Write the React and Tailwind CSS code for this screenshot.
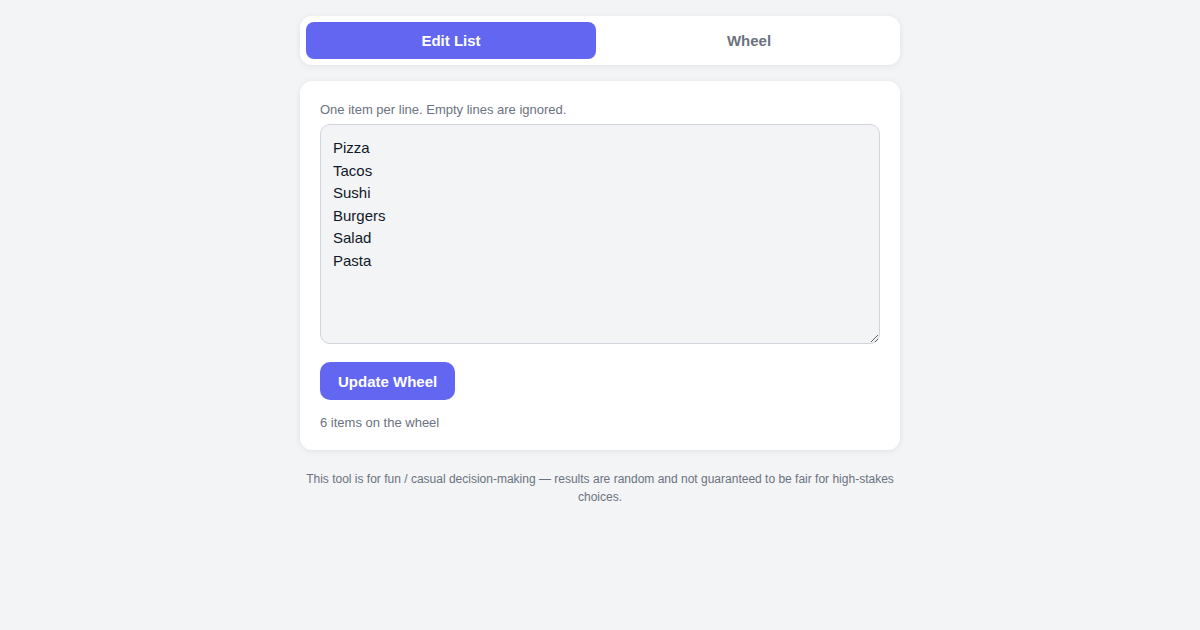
import React from "react";

export default function App() {
  return (
    <div className="min-h-[630px] w-full bg-[#f3f4f6] font-['Liberation_Sans',Arial,sans-serif]">
      <div className="mx-auto w-[600px] pt-4">
        <div className="flex gap-2 rounded-xl bg-white p-1.5 shadow-[0_1px_6px_rgba(0,0,0,0.08)]">
          <button className="h-[37px] flex-1 rounded-lg bg-[#6366f1] pt-0.5 text-[15px] font-bold text-white">
            Edit List
          </button>
          <button className="h-[37px] flex-1 rounded-lg pt-0.5 text-[15px] font-bold text-[#6b7280]">
            Wheel
          </button>
        </div>

        <div className="mt-4 rounded-xl bg-white px-5 pt-5 pb-[18px] shadow-[0_1px_6px_rgba(0,0,0,0.08)]">
          <p className="mb-[5px] text-[13px] leading-[18px] text-[#6b7280]">
            One item per line. Empty lines are ignored.
          </p>
          <textarea
            className="block h-[220px] w-full resize-y rounded-[10px] border border-[#d1d5db] bg-[#f3f4f6] px-3 py-3 text-[15px] leading-[22.6px] text-[#111827] outline-none font-['Liberation_Sans',Arial,sans-serif]"
            defaultValue={"Pizza\nTacos\nSushi\nBurgers\nSalad\nPasta"}
          />
          <button className="mt-[18px] h-[38px] rounded-[10px] bg-[#6366f1] px-[18px] pt-0.5 text-[15px] font-bold text-white">
            Update Wheel
          </button>
          <p className="mt-[14px] text-[13px] leading-[18px] text-[#6b7280]">6 items on the wheel</p>
        </div>

        <p className="mt-5 text-center text-[12px] leading-[18px] text-[#6b7280]">
          This tool is for fun / casual decision-making — results are random and not guaranteed to be fair for high-stakes choices.
        </p>
      </div>
    </div>
  );
}
